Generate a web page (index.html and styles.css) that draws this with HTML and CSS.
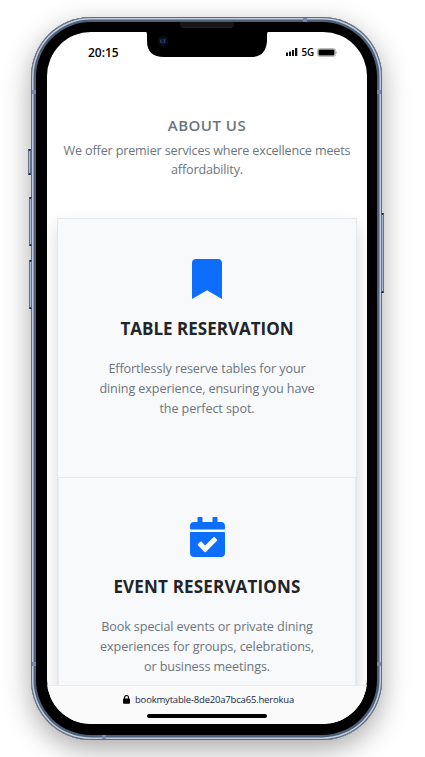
FILE: index.html
```html
<!DOCTYPE html>
<html lang="en">
<head>
<meta charset="utf-8">
<title>About us</title>
<link rel="stylesheet" href="styles.css">
</head>
<body>
<div class="phone">
  <i class="key mute"></i><i class="key up"></i><i class="key down"></i><i class="key power"></i>
  <i class="band b1"></i><i class="band b2"></i><i class="band b3"></i><i class="band b4"></i><i class="band b5"></i><i class="band b6"></i>
  <i class="speaker"></i>
  <div class="screen">
    <svg class="notch" width="122" height="26" viewBox="0 0 122 26"><path d="M0 0H122Q121 0 121 3V9Q120 25 105 25H18Q1 25 1 9V3Q1 0 0 0Z" fill="#000"/><circle cx="17" cy="9" r="5.5" fill="#080b10"/><circle cx="17" cy="9" r="3" fill="#101a2b"/><path d="M15 7.5Q14 9 15 11" stroke="#27475c" fill="none"/><path d="M18.5 7V11" stroke="#2b3486" stroke-width="1.5"/></svg>
    <header class="status">
      <span class="time">20:15</span>
      <span class="signal">
        <svg width="12" height="8" viewBox="0 0 12 8"><path d="M0 4.500h2V8H0zM3 3.500h2V8H3zM6 2h2v6H6zM9 0h2.300v8H9z" fill="#111"/></svg>
        <b class="net">5G</b>
        <svg width="21" height="9" viewBox="0 0 21 9"><rect x=".5" y=".5" width="18" height="8" rx="2" fill="#fff" stroke="#bcbcbc"/><rect x="1.5" y="1.5" width="16" height="6" rx="1" fill="#000"/><path d="M19.5 3q1.5 1.5 0 3z" fill="#777"/></svg>
      </span>
    </header>
    <main class="content">
      <h1 class="heading">ABOUT US</h1>
      <p class="lead"><span>We offer premier services where excellence meets</span><span>affordability.</span></p>
      <div class="cards">
        <section class="card">
          <svg class="icon" width="30" height="40" viewBox="0 0 384 512"><path fill="#0d6efd" d="M0 512V48C0 21.5 21.500 0 48 0h288c26.500 0 48 21.500 48 48v464L192 400 0 512z"/></svg>
          <h2>TABLE RESERVATION</h2>
          <p><span>Effortlessly reserve tables for your</span><span>dining experience, ensuring you have</span><span>the perfect spot.</span></p>
        </section>
        <section class="card">
          <svg class="icon" width="35" height="40" viewBox="0 0 448 512"><path fill="#0d6efd" d="M436 160H12c-6.627 0-12-5.373-12-12v-36c0-26.510 21.490-48 48-48h48V12c0-6.627 5.373-12 12-12h40c6.627 0 12 5.373 12 12v52h128V12c0-6.627 5.373-12 12-12h40c6.627 0 12 5.373 12 12v52h48c26.510 0 48 21.490 48 48v36c0 6.627-5.373 12-12 12zM12 192h424c6.627 0 12 5.373 12 12v260c0 26.510-21.490 48-48 48H48c-26.510 0-48-21.490-48-48V204c0-6.627 5.373-12 12-12zm333.300 95.900l-28.200-28.400c-4.700-4.700-12.300-4.700-17-.1L194 364.200l-45.700-46c-4.700-4.700-12.300-4.700-17-.1l-28.400 28.200c-4.700 4.700-4.700 12.300-.1 17l82.600 83.300c4.700 4.700 12.300 4.700 17 .1l142.700-141.600c4.700-4.700 4.700-12.300.1-17z"/></svg>
          <h2 class="wide">EVENT RESERVATIONS</h2>
          <p><span>Book special events or private dining</span><span>experiences for groups, celebrations,</span><span>or business meetings.</span></p>
        </section>
      </div>
    </main>
    <footer class="browser">
      <div class="address">
        <svg width="7" height="9" viewBox="0 0 7 9"><path d="M1.500 4V2.500a2 2 0 0 1 4 0V4" fill="none" stroke="#000" stroke-width="1.200"/><rect y="3.600" width="7" height="5.200" rx=".8" fill="#000"/></svg>
        <span class="url">bookmytable-8de20a7bca65.herokua</span>
      </div>
      <i class="home"></i>
    </footer>
  </div>
</div>
</body>
</html>
```
FILE: styles.css
```css
* { box-sizing: border-box; }
body { display: flow-root; margin: 0; height: 757px; overflow: hidden; background: #fff; font-family: "Open Sans", sans-serif; }
h1, h2, p { margin: 0; }
.phone {
  position: relative; width: 351px; height: 723px; margin: 17px 0 0 31px; padding: 15px 15px 15px 16px;
  display: flow-root; border-radius: 60px; background: #000;
  box-shadow: inset 0 0 0 1px #626c7d, inset 0 0 0 2.500px #c1cce0, inset 0 0 0 5px #4c6078, 0 9px 28px rgba(0,0,0,.34);
}
.key { position: absolute; width: 3px; background: #aab9d3; border: 1px solid #64748e; border-top: 2px solid #28364c; border-bottom: 2px solid #28364c; }
.mute { left: -3px; top: 132px; height: 26px; }
.up { left: -2px; top: 180px; height: 49px; }
.down { left: -2px; top: 243px; height: 49px; }
.power { right: -2px; top: 196px; height: 80px; }
.band { position: absolute; background: #7789ab; width: 4px; height: 4px; }
.b1 { left: 1px; top: 73px; }
.b2 { right: 1px; top: 73px; }
.b3 { left: 1px; top: 645px; }
.b4 { right: 1px; top: 645px; }
.b5 { left: 71px; bottom: 1px; }
.b6 { right: 75px; top: 1px; }
.speaker { position: absolute; left: 149px; top: 5px; width: 54px; height: 6px; border-radius: 0 0 4px 4px; background: #151515; border-bottom: 1px solid #222; }
.screen { position: relative; height: 692px; border-radius: 44px; overflow: hidden; background: #fff; display: flex; flex-direction: column; }
.notch { position: absolute; left: 99px; top: 0; }
.status { height: 40px; flex: none; display: flex; justify-content: space-between; align-items: center; padding: 0 29px 0 41px; color: #000; }
.time { font: 600 12px "Open Sans", sans-serif; }
.signal { display: flex; align-items: center; gap: 3px; }
.net { font: 600 9.800px "Open Sans", sans-serif; letter-spacing: -.1px; }
.content { flex: 1; min-height: 0; overflow: hidden; padding: 43px 10px 0; text-align: center; }
.content span { display: block; white-space: nowrap; }
.heading { font-size: 15px; font-weight: 600; line-height: 20px; letter-spacing: .5px; color: #6c757d; }
.lead { margin-top: 6px; font-size: 12.600px; line-height: 19px; letter-spacing: -.16px; color: #6c757d; }
.cards { margin-top: 39px; border: 1px solid #e5e8eb; box-shadow: 0 8px 16px rgba(0,0,0,.15); background: #f8f9fb; }
.card { height: 258px; padding: 39px 0 0; border: 1px solid #e6e8ec; }
.card:first-child { border-color: transparent; }
.icon { display: block; margin: 0 auto; }
.card h2 { margin-top: 18px; font-size: 17px; font-weight: 700; line-height: 24px; color: #212529; }
.card .wide { letter-spacing: .18px; }
.card p { margin-top: 18px; font-size: 12.600px; line-height: 19.800px; letter-spacing: -.09px; color: #6c757d; }
.browser { height: 39px; flex: none; border-top: 1px solid #e9eaed; background: #fafafb; }
.address { height: 27px; margin-bottom: 1px; display: flex; align-items: center; justify-content: center; gap: 5px; margin-left: 4px; }
.url { width: 160px; white-space: nowrap; font-size: 9.500px; letter-spacing: -.19px; color: #182746; }
.home { display: block; width: 120px; height: 4px; border-radius: 2px; background: #000; margin: 0 auto; }
```
